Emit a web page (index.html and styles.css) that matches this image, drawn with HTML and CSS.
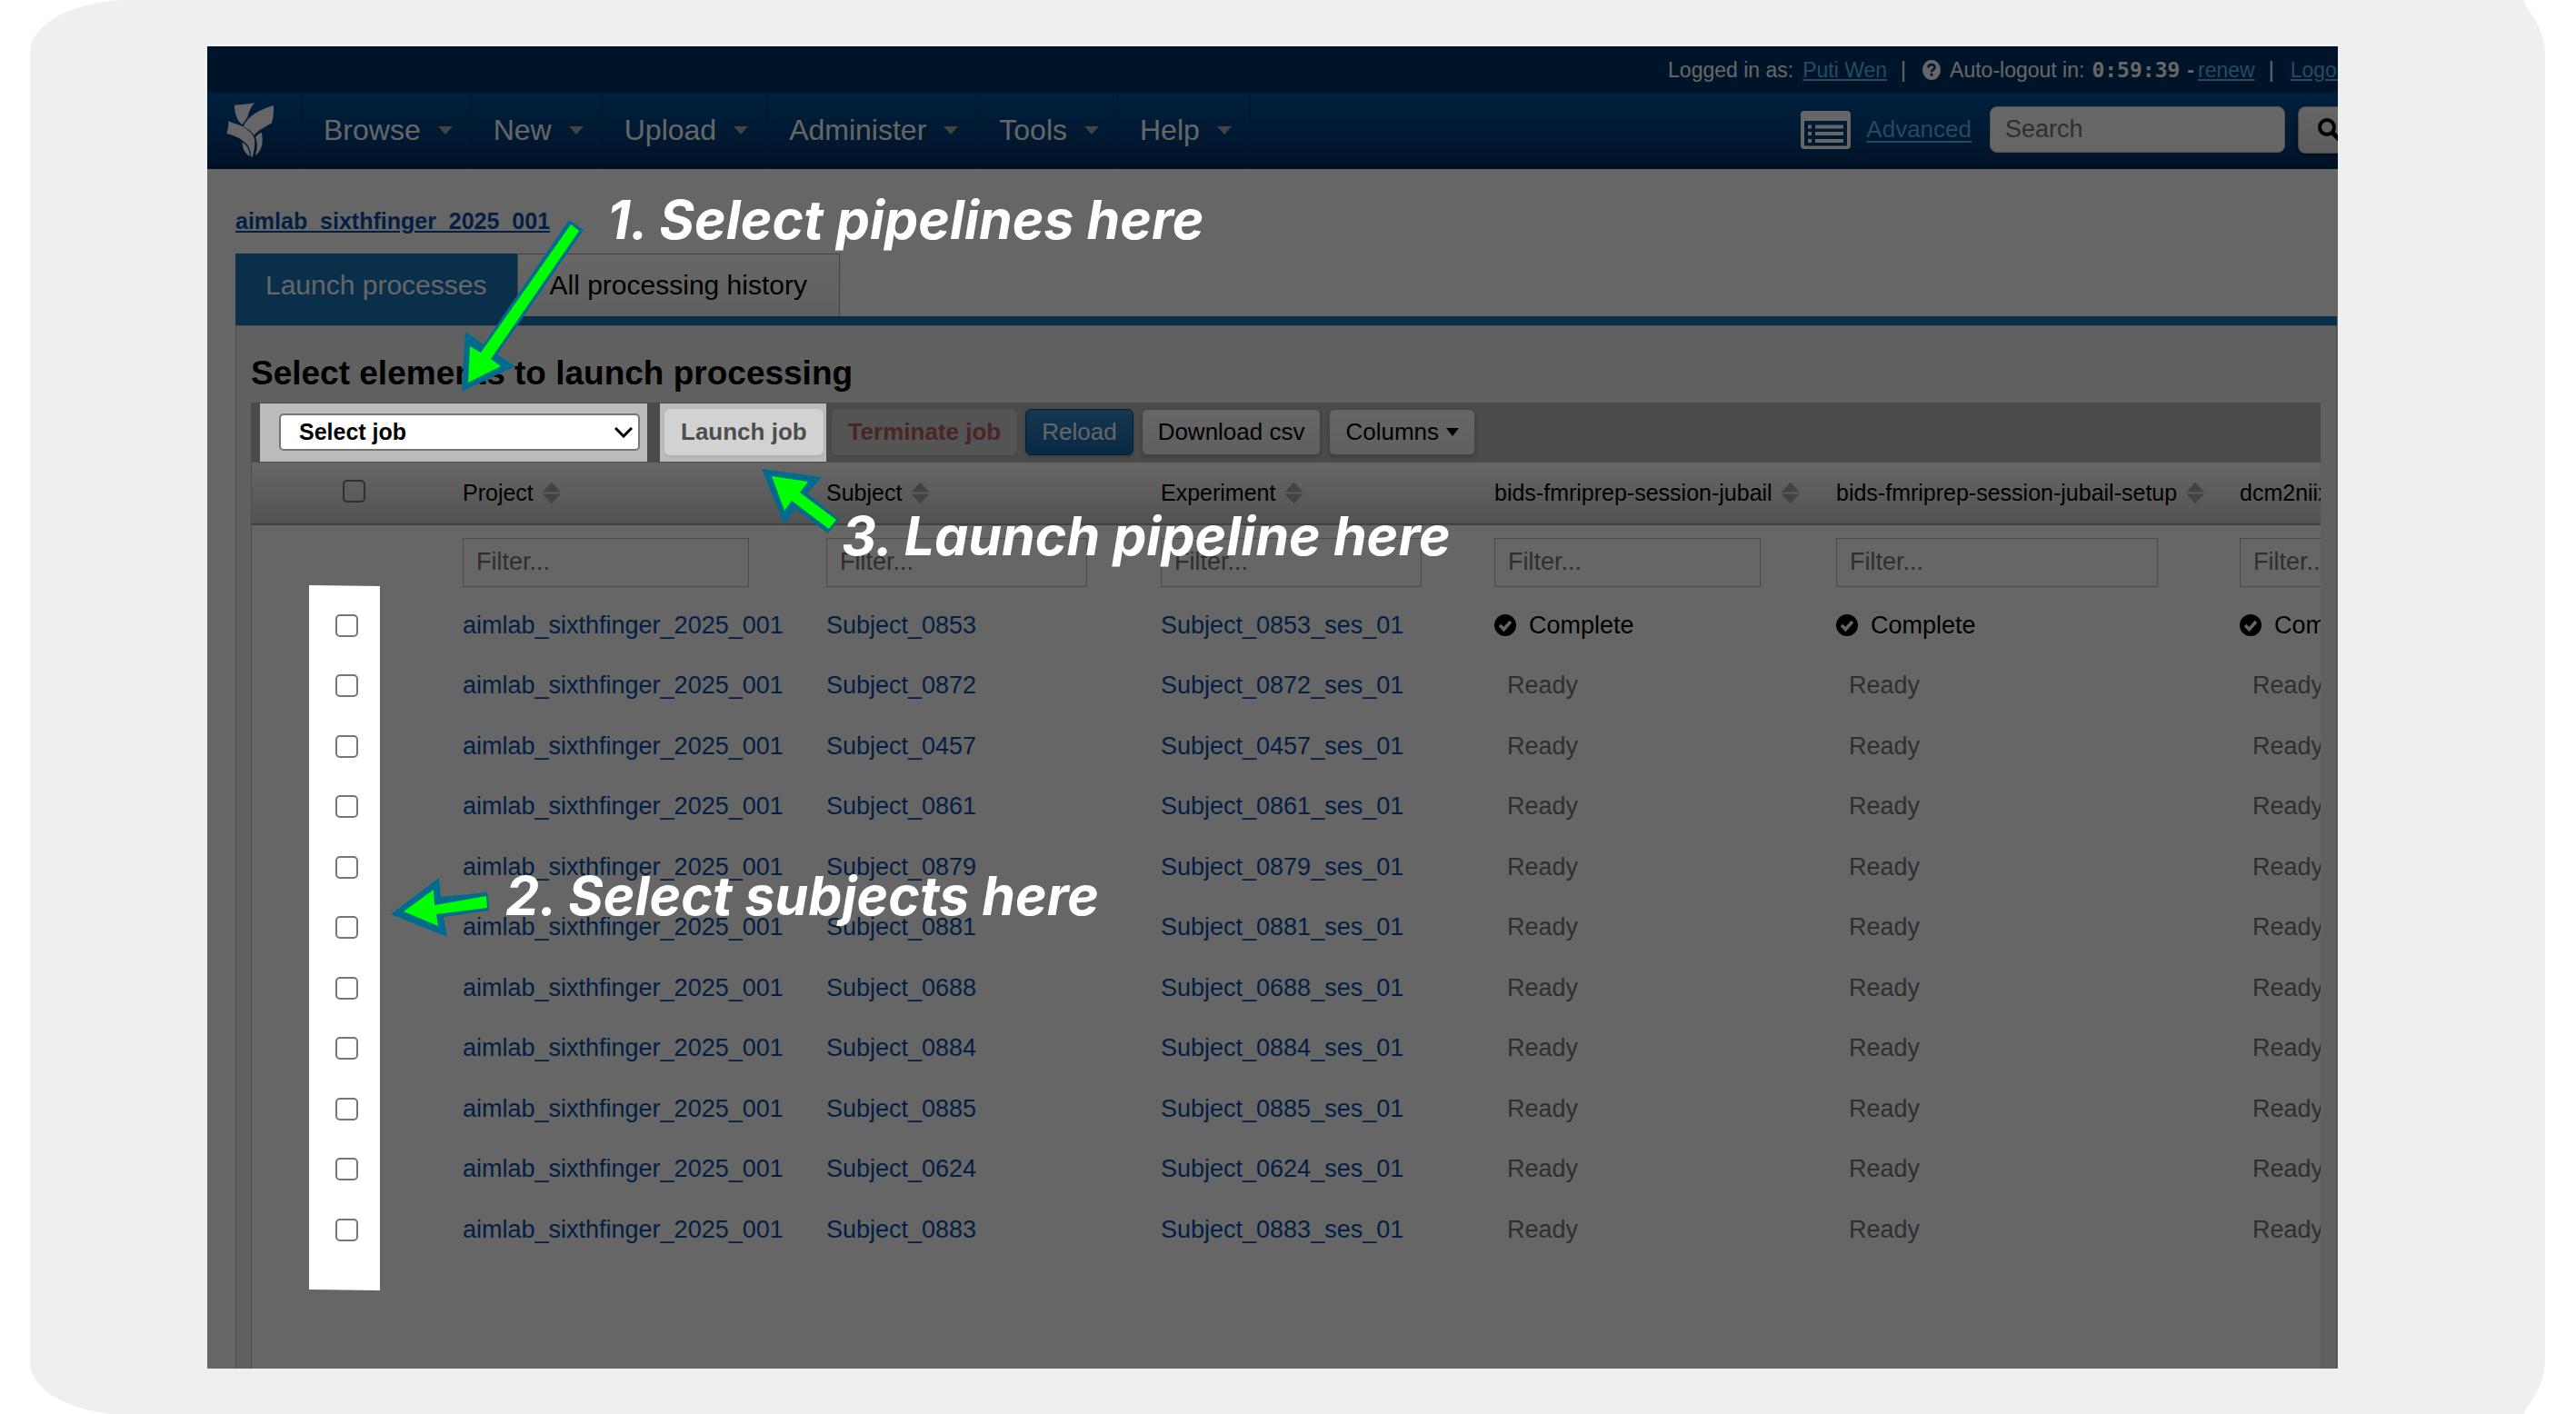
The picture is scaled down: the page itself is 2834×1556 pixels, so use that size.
FILE: index.html
```html
<!DOCTYPE html>
<html lang="en">
<head>
<meta charset="utf-8">
<title>Launch processing</title>
<link rel="stylesheet" href="styles.css">
</head>
<body>
<div class="frame">
<div class="app">
  <div class="userbar">
    <div class="userbar-items">
      <span>Logged in as:</span><a class="user" href="#">Puti Wen</a><span class="bar">|</span>
      <svg class="help" viewBox="0 0 20 22" aria-hidden="true"><ellipse cx="10" cy="11" rx="10" ry="11" fill="#fff"/><path d="M6.500 8.500C6.500 4 13.500 4 13.500 8.200C13.500 10.500 10 10.500 10 13.200" fill="none" stroke="#036" stroke-width="2.600"/><rect x="8.600" y="14.800" width="2.800" height="2.800" fill="#036"/></svg>
      <span>Auto-logout in:</span><b class="timer">0:59:39</b><b>-</b><a class="renew" href="#">renew</a><span class="bar">|</span><a class="logout" href="#">Logout</a>
    </div>
  </div>
  <nav class="nav">
    <svg class="logo" viewBox="0 0 228 228" role="img" aria-label="XNAT"><g fill="#fff"><path d="M54 32Q90 31 120 25C106 42 101 56 98 70L80 97C62 83 54 60 54 32Z"/><path d="M183 33C183 53 183 72 177 91C156 104 137 112 119 131C109 119 97 110 83 103C100 64 140 47 183 33Z"/><path d="M34 84C55 96 77 96 96 113C112 124 121 137 121 152C120 172 118 188 113 203C111 203 109 203 108 201C108 182 101 161 80 149C66 137 45 131 28 125C33 111 35 98 34 84Z"/><path d="M80 155C97 163 103 182 105 201C91 194 79 178 80 155Z"/><path d="M143 122C150 150 146 182 122 199C130 176 131 158 123 138C129 130 136 125 143 122Z"/></g></svg>
    <button class="menu" type="button">Browse</button>
    <button class="menu" type="button">New</button>
    <button class="menu" type="button">Upload</button>
    <button class="menu" type="button">Administer</button>
    <button class="menu" type="button">Tools</button>
    <button class="menu" type="button">Help</button>
    <form class="search">
      <svg class="list" viewBox="0 0 55 42" aria-hidden="true"><path fill="#fff" fill-rule="evenodd" d="M4 0H51Q55 0 55 4V38Q55 42 51 42H4Q0 42 0 38V4Q0 0 4 0ZM4 11V38.500H51V11Z"/><path stroke="#fff" stroke-width="4" d="M8 17.500H12M16 17.500H47M8 25H12M16 25H47M8 33H12M16 33H47"/></svg>
      <a class="advanced" href="#">Advanced</a>
      <input class="search-box" type="text" placeholder="Search" aria-label="Search">
      <button class="search-go" type="button" aria-label="Go"><svg viewBox="0 0 28 28" aria-hidden="true"><circle cx="10" cy="11" r="8" fill="none" stroke="#000" stroke-width="4"/><path d="M16 17L24 25" stroke="#000" stroke-width="5"/></svg></button>
    </form>
  </nav>
  <main class="content">
    <a class="crumb" href="#">aimlab_sixthfinger_2025_001</a>
    <div class="tabs">
      <button class="tab active" type="button">Launch processes</button>
      <button class="tab" type="button">All processing history</button>
    </div>
    <section class="panel">
      <h1>Select elements to launch processing</h1>
      <div class="toolbar">
        <div class="job"><select aria-label="Select job"><option>Select job</option></select><svg viewBox="0 0 20 12" aria-hidden="true"><path d="M1 1L10 10L19 1" fill="none" stroke="#000" stroke-width="3"/></svg></div>
        <button class="btn off" type="button">Launch job</button>
        <button class="btn off danger" type="button">Terminate job</button>
        <button class="btn primary" type="button">Reload</button>
        <button class="btn" type="button">Download csv</button>
        <button class="btn drop" type="button">Columns</button>
      </div>
      <div class="grid">
      <table>
        <colgroup><col class="c-check"><col class="c-project"><col class="c-subject"><col class="c-exp"><col class="c-prep"><col class="c-setup"><col class="c-last"></colgroup>
        <thead>
          <tr>
            <th class="all"><input type="checkbox" aria-label="Select all"></th>
            <th><span class="sort">Project</span></th>
            <th><span class="sort">Subject</span></th>
            <th><span class="sort">Experiment</span></th>
            <th><span class="sort">bids-fmriprep-session-jubail</span></th>
            <th><span class="sort">bids-fmriprep-session-jubail-setup</span></th>
            <th><span class="sort">dcm2niix</span></th>
          </tr>
        </thead>
        <tbody id="rows">
          <tr class="filters">
            <td></td>
            <td><input class="f-project" type="text" placeholder="Filter..." aria-label="Filter project"></td>
            <td><input class="f-subject" type="text" placeholder="Filter..." aria-label="Filter subject"></td>
            <td><input class="f-subject" type="text" placeholder="Filter..." aria-label="Filter experiment"></td>
            <td><input class="f-prep" type="text" placeholder="Filter..." aria-label="Filter bids-fmriprep-session-jubail"></td>
            <td><input class="f-setup" type="text" placeholder="Filter..." aria-label="Filter bids-fmriprep-session-jubail-setup"></td>
            <td><input class="f-subject" type="text" placeholder="Filter..." aria-label="Filter dcm2niix"></td>
          </tr>
        </tbody>
      </table>
      </div>
    </section>
  </main>
  <svg class="shade" aria-hidden="true">
    <path fill="#000" fill-opacity=".6" fill-rule="evenodd" d="M0 0H6000V4000H0ZM58 393V457H484V393ZM498 393V457H681V393ZM112 593L190 594V1369L112 1368Z"/>
    <g fill="#006b8f"><path d="M398 191L414 202L319 339L339 352L280 380L284 314L304 328Z"/><path d="M610 465L676 474L660 492L695 520L683 536L647 509L635 526Z"/><path d="M202 955L255 915L257 936L308 931L310 951L260 958L264 980Z"/></g>
    <g fill="#0f0"><path d="M400 196L409 203L312 344L323 352L287 370L289 330L301 337Z"/><path d="M621 473L661 479L652 491L692 521L684 531L643 500L635 511Z"/><path d="M216 952L249 928L250 945L307 935L308 948L252 955L254 968Z"/></g>
  </svg>
  <p class="note note-1">1. Select pipelines here</p>
  <p class="note note-2">2. Select subjects here</p>
  <p class="note note-3">3. Launch pipeline here</p>
</div>
</div>
<script src="rows.js"></script>
</body>
</html>
```
FILE: styles.css
```css
* { box-sizing: border-box; }
body { margin: 0; background: #fff; font-family: "Liberation Sans", Arial, sans-serif; }
button, input, select { font: inherit; margin: 0; }
button { cursor: pointer; }

.frame {
  margin: 0 34px 0 33px;
  padding: 51px 228px 51px 195px;
  background: #efefef;
  border-radius: 110px 0 0 110px / 58px 0 0 58px;
  clip-path: polygon(0 0, calc(100% - 24px) 0, calc(100% - 20px) 8px, calc(100% - 10px) 23px, calc(100% - 4px) 37px, calc(100% - 1px) 49px, 100% 57px, 100% calc(100% - 57px), calc(100% - 1px) calc(100% - 49px), calc(100% - 4px) calc(100% - 37px), calc(100% - 10px) calc(100% - 23px), calc(100% - 20px) calc(100% - 8px), calc(100% - 24px) 100%, 0 100%);
}
.app { position: relative; overflow: hidden; background: #fff; color: #000; }

.userbar { height: 51px; background: #036; color: #fff; font-size: 23px; overflow: hidden; }
.userbar-items { display: flex; align-items: center; justify-content: flex-end; height: 52px; margin-right: -18px; white-space: nowrap; }
.userbar a, .advanced { color: #60b8f0; }
.user { margin-left: 10px; }
.bar { margin: 0 18px 0 15px; }
.help { width: 20px; height: 22px; margin-right: 10px; }
.timer { font-family: "DejaVu Sans Mono", monospace; margin: 0 8px; }
.renew { margin-left: 4px; }

.nav { display: flex; align-items: stretch; height: 84px; overflow: hidden; background: linear-gradient(#00509a, #003a74 70%, #002b5c); color: #fff; }
.logo { flex: none; width: 76px; height: 76px; margin: 3px 15px 5px 12px; }
.menu { display: flex; align-items: center; flex: none; border: 0; border-left: 1px solid #003468; background: none; color: #fff; font-size: 32px; padding: 0 20px 1px 24px; }
.menu::after { content: ""; margin-left: 19px; border: 8px solid transparent; border-top: 9px solid #a8a8b0; border-bottom: 0; }
.menu:nth-of-type(6) { border-right: 1px solid #003468; }
.search { display: flex; align-items: center; margin: 0 -18px 0 auto; padding-bottom: 3px; }
.list { width: 55px; height: 42px; margin-right: 17px; }
.advanced { font-size: 26px; text-underline-offset: 4px; }
.search-box { width: 325px; height: 51px; margin: 0 14px 0 20px; padding: 0 16px; border: 1px solid #ccc; border-radius: 8px; background: #fff; font-size: 27px; }
::placeholder { color: #757575; opacity: 1; }
.search-go { width: 62px; height: 52px; padding: 0 0 0 21px; border: 1px solid #aaa; border-radius: 8px; background: linear-gradient(#fff, #e6e6e6); box-shadow: 0 2px 4px #0006; }
.search-go svg { display: block; width: 28px; height: 28px; }

.content { padding: 42px 1px 0 31px; }
.crumb { display: block; width: fit-content; font-size: 25px; line-height: 30px; font-weight: bold; color: #084fab; }
.tabs { display: flex; margin-top: 21px; height: 79px; border-bottom: 10px solid #1a75bb; }
.tab { height: 69px; border: 1px solid #aaa; border-bottom: 0; background: linear-gradient(#fff, #f0f0f0); color: #000; font-size: 30px; padding: 0 35px; }
.tab.active { border-color: #1a75bb; background: #1a75bb; color: #fff; padding: 0 32px; }

.panel { padding: 30px 17px 0 16px; border: 1px solid #c4c4c4; border-bottom: 0; background: #f0f0f0; }
h1 { margin: 0 0 10px; font-size: 37px; line-height: 44px; }
.toolbar { display: flex; align-items: center; gap: 9px; height: 66px; padding: 0 0 2px 31px; background: #bbb; }
.job { position: relative; margin-right: 18px; }
.job select { display: block; appearance: none; width: 397px; height: 41px; padding: 0 20px; border: 2px solid #767676; border-radius: 5px; background: #fff; color: #000; font-size: 25px; font-weight: bold; }
.job svg { position: absolute; right: 8px; top: 15px; width: 20px; height: 12px; }
.btn { display: flex; align-items: center; height: 51px; padding: 0 17px; border: 1px solid #aaa; border-radius: 6px; background: linear-gradient(#fff, #eee); box-shadow: 0 2px 4px #0003; color: #000; font-size: 26px; white-space: nowrap; }
.btn.off { border-color: #d2d2d2; background: #d2d2d2; box-shadow: 0 2px 3px #0001; color: #4d4d4d; font-weight: bold; }
.btn.danger { color: #b85c5c; }
.btn.primary { border-color: #00508c; background: linear-gradient(#3a87c4, #1468ae); color: #fff; }
.btn.drop::after { content: ""; margin-left: 8px; border: 7px solid transparent; border-top: 9px solid #000; border-bottom: 0; }

.grid { overflow: hidden; border-left: 1px solid #c0c0c0; background: #fff; padding-bottom: 120px; }
table { table-layout: fixed; width: 2479px; border-collapse: separate; border-spacing: 0; }
.c-check { width: 224px; }
.c-project { width: 400px; }
.c-subject { width: 368px; }
.c-exp { width: 367px; }
.c-prep { width: 376px; }
.c-setup { width: 444px; }
.c-last { width: 300px; }
th { height: 69px; padding: 0 0 0 8px; border-bottom: 2px solid #a0a0a0; background: linear-gradient(#fff, #cecece); font-size: 25px; font-weight: normal; text-align: left; white-space: nowrap; }
.sort { display: inline-flex; align-items: center; }
.sort::after { content: ""; width: 20px; height: 24px; margin-left: 10px; background: #a8a8a8; clip-path: polygon(50% 0, 100% 46%, 0 46%, 0 54%, 100% 54%, 50% 100%, 0 54%, 0 46%); }
td { height: 66px; padding: 0 0 0 8px; font-size: 27px; white-space: nowrap; }
tr:nth-child(odd) td { height: 67px; }
.filters:first-child td { height: 77px; padding-top: 4px; }
.filters input { display: block; height: 54px; padding: 0 14px; border: 1px solid #b8b8b8; background: #fff; font-size: 27px; }
.f-project { width: 315px; }
.f-subject { width: 287px; }
.f-prep { width: 293px; }
.f-setup { width: 354px; }
input[type="checkbox"] { appearance: none; display: block; width: 25px; height: 25px; border: 2px solid #767676; border-radius: 5px; background: #fff; }
th.all, td.pick { padding-left: 92px; }
th.all { padding-left: 100px; padding-bottom: 4px; }
th.all input { background: none; }
td a { color: #084fab; text-decoration: none; }
.ready { padding-left: 14px; color: #777; }
.done { display: flex; align-items: center; gap: 14px; }
.done svg { width: 24px; height: 24px; }

.shade { position: absolute; inset: 0; width: 100%; height: 100%; pointer-events: none; }
.note { position: absolute; margin: 0; color: #fff; font: italic 700 59px/72px Inter, sans-serif; white-space: nowrap; }
.note-1 { left: 440px; top: 155px; }
.note-2 { left: 328px; top: 899px; }
.note-3 { left: 698px; top: 503px; }
```
FILE: rows.js
```js
const ids = ["0853", "0872", "0457", "0861", "0879", "0881", "0688", "0884", "0885", "0624", "0883"];
const complete = '<span class="done"><svg viewBox="0 0 24 24" aria-hidden="true"><circle cx="12" cy="12" r="12"/><path d="M6 12L10.500 16.500L18 8" fill="none" stroke="#fff" stroke-width="3.600"/></svg>Complete</span>';
const ready = '<span class="ready">Ready</span>';
document.getElementById("rows").insertAdjacentHTML("beforeend", ids.map((id, i) => {
  const status = `<td>${i === 0 ? complete : ready}</td>`;
  return `<tr><td class="pick"><input type="checkbox" aria-label="Select Subject_${id}"></td>
    <td><a href="#">aimlab_sixthfinger_2025_001</a></td>
    <td><a href="#">Subject_${id}</a></td>
    <td><a href="#">Subject_${id}_ses_01</a></td>${status.repeat(3)}</tr>`;
}).join(""));
```
